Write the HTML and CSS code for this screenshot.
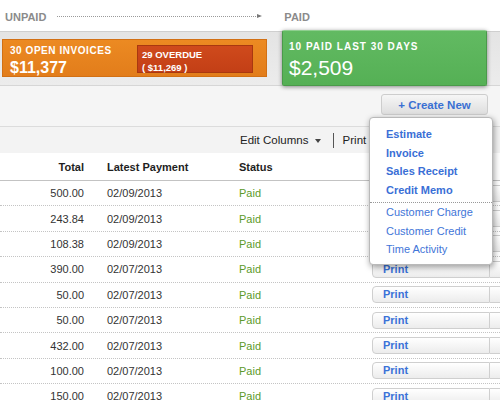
FILE: index.html
```html
<!DOCTYPE html>
<html>
<head>
<meta charset="utf-8">
<link rel="stylesheet" href="styles.css">
</head>
<body>
<div class="page">
  <div class="flow">
    <span class="flow-label">UNPAID</span>
    <span class="flow-arrow"></span>
    <span class="flow-label paid-label">PAID</span>
  </div>
  <div class="band">
    <div class="open-box">
      <div class="open-main">
        <div class="box-title open-title">30 OPEN INVOICES</div>
        <div class="open-amount">$11,377</div>
      </div>
      <div class="overdue">
        <div class="overdue-title">29 OVERDUE</div>
        <div class="overdue-amount">( $11,269 )</div>
      </div>
    </div>
    <div class="paid-box">
      <div class="box-title">10 PAID LAST 30 DAYS</div>
      <div class="paid-amount">$2,509</div>
    </div>
  </div>
  <div class="actions">
    <button class="create-btn">+ Create New</button>
  </div>
  <div class="toolbar">
    <span class="edit-cols">Edit Columns <span class="caret"></span></span>
    <span class="sep"></span>
    <span class="tb-print">Print</span>
  </div>
  <div class="table">
    <div class="row head">
      <div class="c-total">Total</div>
      <div class="c-pay">Latest Payment</div>
      <div class="c-status">Status</div>
      <div></div>
      <div></div>
    </div>
    <div class="row"><div class="c-total">500.00</div><div class="c-pay">02/09/2013</div><div class="c-status paid">Paid</div><div class="pbtn"></div><div class="pbtn2"></div></div>
    <div class="row"><div class="c-total">243.84</div><div class="c-pay">02/09/2013</div><div class="c-status paid">Paid</div><div class="pbtn"></div><div class="pbtn2"></div></div>
    <div class="row"><div class="c-total">108.38</div><div class="c-pay">02/09/2013</div><div class="c-status paid">Paid</div><div class="pbtn"></div><div class="pbtn2"></div></div>
    <div class="row"><div class="c-total">390.00</div><div class="c-pay">02/07/2013</div><div class="c-status paid">Paid</div><div class="pbtn">Print</div><div class="pbtn2"></div></div>
    <div class="row"><div class="c-total">50.00</div><div class="c-pay">02/07/2013</div><div class="c-status paid">Paid</div><div class="pbtn">Print</div><div class="pbtn2"></div></div>
    <div class="row"><div class="c-total">50.00</div><div class="c-pay">02/07/2013</div><div class="c-status paid">Paid</div><div class="pbtn">Print</div><div class="pbtn2"></div></div>
    <div class="row"><div class="c-total">432.00</div><div class="c-pay">02/07/2013</div><div class="c-status paid">Paid</div><div class="pbtn">Print</div><div class="pbtn2"></div></div>
    <div class="row"><div class="c-total">100.00</div><div class="c-pay">02/07/2013</div><div class="c-status paid">Paid</div><div class="pbtn">Print</div><div class="pbtn2"></div></div>
    <div class="row"><div class="c-total">150.00</div><div class="c-pay">02/07/2013</div><div class="c-status paid">Paid</div><div class="pbtn">Print</div><div class="pbtn2"></div></div>
  </div>
  <div class="menu">
    <div class="mi strong">Estimate</div>
    <div class="mi strong">Invoice</div>
    <div class="mi strong">Sales Receipt</div>
    <div class="mi strong">Credit Memo</div>
    <div class="menu-sep"></div>
    <div class="mi">Customer Charge</div>
    <div class="mi">Customer Credit</div>
    <div class="mi">Time Activity</div>
  </div>
</div>
</body>
</html>
```

FILE: styles.css
```css
html, body {
  margin: 0;
  padding: 0;
  background: #ffffff;
  overflow: hidden;
}
body {
  width: 500px;
  height: 400px;
  font-family: "Liberation Sans", Arial, Helvetica, sans-serif;
  font-size: 11px;
  color: #333;
}
.page {
  position: relative;
  width: 500px;
  height: 400px;
  overflow: hidden;
}

/* flow header */
.flow {
  height: 31px;
  display: flex;
  align-items: center;
  padding-left: 5px;
  padding-top: 2px;
  box-sizing: border-box;
}
.flow-label {
  font-weight: bold;
  font-size: 11px;
  color: #8b8b8b;
  text-shadow: 0 1px 0 #fff;
}
.flow-arrow {
  width: 203px;
  margin-left: 11px;
  border-top: 1px dotted #9a9a9a;
  position: relative;
  height: 0;
}
.flow-arrow::after {
  content: "";
  position: absolute;
  right: -2px;
  top: -3px;
  border-left: 5px solid #777;
  border-top: 2.5px solid transparent;
  border-bottom: 2.5px solid transparent;
}
.paid-label {
  margin-left: 24px;
}

/* summary band */
.band {
  height: 53px;
  background: linear-gradient(#e4e4e4, #ececec);
  border-top: 1px solid #cfcfcf;
  border-bottom: 1px solid #d6d6d6;
  display: flex;
  align-items: flex-start;
}
.open-box {
  margin-top: 7px;
  margin-left: 2px;
  width: 265px;
  height: 38px;
  box-sizing: border-box;
  background: linear-gradient(#ec8a22, #e27d1b);
  border: 1px solid #d27014;
  display: flex;
  color: #fff;
}
.open-main {
  padding: 5px 0 0 7px;
  width: 127px;
}
.box-title {
  font-weight: bold;
  font-size: 10px;
  letter-spacing: 1px;
  line-height: 12px;
  color: #fff;
}
.open-title {
  letter-spacing: 0.55px;
}
.open-amount {
  font-size: 16px;
  font-weight: bold;
  line-height: 18px;
  margin-top: 2px;
}
.overdue {
  margin-top: 5px;
  width: 116px;
  height: 28px;
  box-sizing: border-box;
  background: linear-gradient(#cf4a1c, #c33f16);
  border: 1px solid #a93810;
  padding: 3px 0 0 4px;
  font-weight: bold;
  font-size: 9.5px;
}
.overdue-title {
  line-height: 12px;
}
.overdue-amount {
  line-height: 12px;
  margin-top: 1px;
}
.paid-box {
  position: relative;
  z-index: 2;
  margin-top: -2px;
  margin-left: 15px;
  width: 205px;
  height: 56px;
  box-sizing: border-box;
  background: linear-gradient(#62ba62, #55b055);
  border: 1px solid #4a9a4a;
  border-top-color: #8fcf8f;
  border-radius: 2px;
  box-shadow: 0 1px 4px rgba(0,0,0,0.45);
  padding: 10px 0 0 6px;
  color: #fff;
}
.paid-amount {
  font-size: 21px;
  line-height: 24px;
  margin-top: 3px;
}

/* actions bar */
.actions {
  height: 41px;
  background: #f5f5f5;
  border-bottom: 1px solid #dcdcdc;
  display: flex;
  justify-content: flex-end;
  align-items: flex-start;
  padding: 8px 12px 0 0;
  box-sizing: border-box;
}
.create-btn {
  width: 107px;
  height: 21px;
  border: 1px solid #cdcdcd;
  border-radius: 3px;
  background: linear-gradient(#f6f6f6, #dedede);
  color: #3a70d3;
  font-family: "Liberation Sans", Arial, sans-serif;
  font-weight: bold;
  font-size: 11.5px;
  padding: 0;
}

/* toolbar */
.toolbar {
  height: 26px;
  background: #f3f3f3;
  display: flex;
  align-items: center;
  padding-left: 240px;
  font-size: 11.5px;
  color: #222;
}
.caret {
  display: inline-block;
  width: 0;
  height: 0;
  border-left: 3.5px solid transparent;
  border-right: 3.5px solid transparent;
  border-top: 4px solid #444;
  vertical-align: middle;
  margin-left: 3px;
}
.sep {
  width: 1px;
  height: 15px;
  background: #555;
  margin: 0 9px 0 12px;
}

/* table */
.table {
  background: #fff;
}
.row {
  display: grid;
  grid-template-columns: 84px 155px 133px 118px 30px;
  align-items: center;
  height: 25.4px;
  border-bottom: 1px dotted #c4c4c4;
  box-sizing: border-box;
}
.row.head {
  height: 28px;
  border-bottom: 1px solid #c3c3c3;
  font-weight: bold;
  color: #1e1e1e;
}
.c-total {
  text-align: right;
}
.c-pay {
  padding-left: 23px;
}
.paid {
  color: #5c9a2a;
}
.pbtn {
  height: 17px;
  box-sizing: border-box;
  border: 1px solid #cfcfcf;
  border-radius: 4px 0 0 4px;
  background: linear-gradient(#ffffff, #ececec);
  color: #3a72d8;
  font-weight: bold;
  padding-left: 10px;
  line-height: 15px;
}
.pbtn2 {
  height: 17px;
  box-sizing: border-box;
  border: 1px solid #cfcfcf;
  border-left: none;
  background: linear-gradient(#ffffff, #ececec);
}

/* dropdown menu */
.menu {
  position: absolute;
  left: 369px;
  top: 117px;
  width: 124px;
  height: 148px;
  box-sizing: border-box;
  background: #fff;
  border: 1px solid #b9b9b9;
  border-radius: 4px;
  box-shadow: 1px 2px 6px rgba(0,0,0,0.4);
  padding-top: 7px;
  z-index: 5;
}
.mi {
  padding-left: 16px;
  line-height: 18.5px;
  color: #4275d8;
  font-size: 11px;
}
.mi.strong {
  font-weight: bold;
  color: #3a6fd6;
}
.menu-sep {
  margin: 3px 0 0 0;
  border-top: 1px dotted #999;
}
```
